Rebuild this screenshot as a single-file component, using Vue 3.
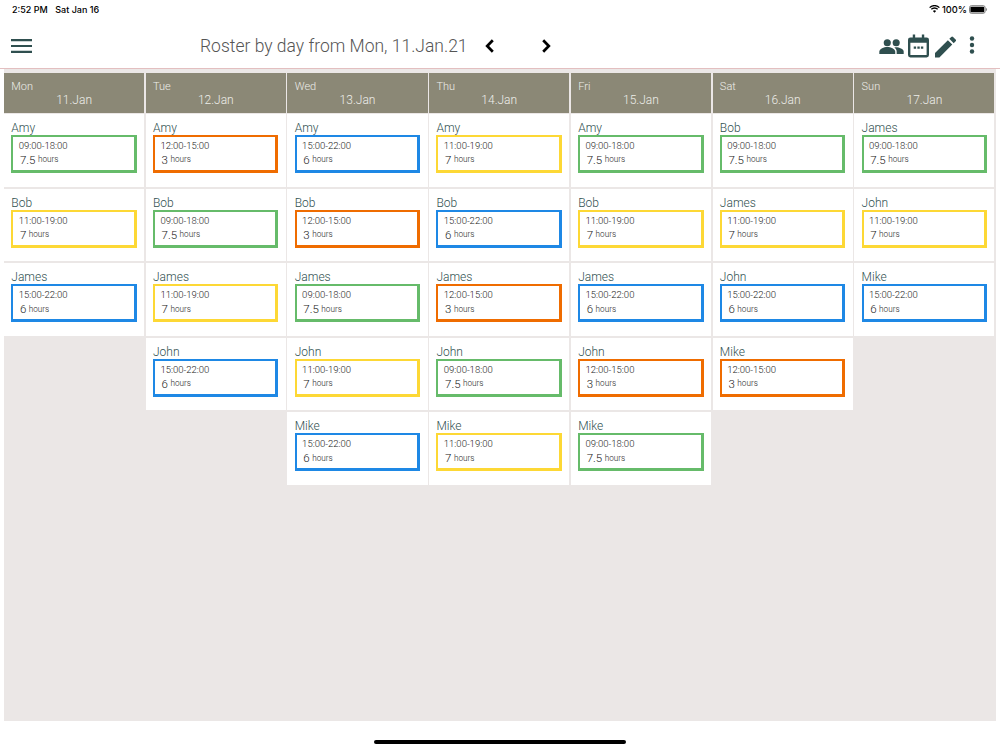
<script setup>
const S = {
  a: { t: '09:00-18:00', h: '7.5', c: 'green' },
  b: { t: '12:00-15:00', h: '3', c: 'orange' },
  c: { t: '15:00-22:00', h: '6', c: 'blue' },
  d: { t: '11:00-19:00', h: '7', c: 'yellow' },
}
const days = [
  { d: 'Mon', n: '11.Jan', r: [['Amy', 'a'], ['Bob', 'd'], ['James', 'c']] },
  { d: 'Tue', n: '12.Jan', r: [['Amy', 'b'], ['Bob', 'a'], ['James', 'd'], ['John', 'c']] },
  { d: 'Wed', n: '13.Jan', r: [['Amy', 'c'], ['Bob', 'b'], ['James', 'a'], ['John', 'd'], ['Mike', 'c']] },
  { d: 'Thu', n: '14.Jan', r: [['Amy', 'd'], ['Bob', 'c'], ['James', 'b'], ['John', 'a'], ['Mike', 'd']] },
  { d: 'Fri', n: '15.Jan', r: [['Amy', 'a'], ['Bob', 'd'], ['James', 'c'], ['John', 'b'], ['Mike', 'a']] },
  { d: 'Sat', n: '16.Jan', r: [['Bob', 'a'], ['James', 'd'], ['John', 'c'], ['Mike', 'b']] },
  { d: 'Sun', n: '17.Jan', r: [['James', 'a'], ['John', 'd'], ['Mike', 'c']] },
]
</script>

<template>
  <div class="page">
    <div class="status">
      <div class="status-left"><span>2:52 PM</span><span>Sat Jan 16</span></div>
      <div class="status-right">
        <svg class="wifi" viewBox="0 0 16 12" width="11" height="8">
          <path d="M8 11.500 5.600 8.900a3.400 3.400 0 0 1 4.800 0zM3.900 7.200l-1.300-1.400a7.600 7.600 0 0 1 10.800 0l-1.300 1.400a5.700 5.700 0 0 0-8.200 0zM1.400 4.600 0 3.200a11.300 11.300 0 0 1 16 0l-1.400 1.400a9.400 9.400 0 0 0-13.200 0z" fill="#000"/>
        </svg>
        <span class="pct">100%</span>
        <svg viewBox="0 0 20 9" width="19" height="9">
          <rect x=".5" y=".5" width="16.500" height="8" rx="2" fill="none" stroke="#777"/>
          <rect x="1.500" y="1.500" width="14.500" height="6" rx="1" fill="#000"/>
          <path d="M18 3v3c.7-.2 1-.8 1-1.500s-.3-1.300-1-1.500z" fill="#777"/>
        </svg>
      </div>
    </div>
    <header class="bar">
      <svg class="menu" viewBox="0 0 21 14" width="21" height="14">
        <path d="M0 1.200h21M0 7h21M0 12.800h21" stroke="#2f4f4f" stroke-width="2.200"/>
      </svg>
      <div class="title">Roster by day from Mon, 11.Jan.21</div>
      <svg class="chev prev" viewBox="0 0 10 14" width="10" height="14"><path d="M7.800 1.300 2.200 7l5.600 5.700" fill="none" stroke="#000" stroke-width="2.700"/></svg>
      <svg class="chev next" viewBox="0 0 10 14" width="10" height="14"><path d="M2.200 1.300 7.800 7l-5.600 5.700" fill="none" stroke="#000" stroke-width="2.700"/></svg>
      <div class="actions">
        <svg class="ic-people" viewBox="0 0 26 16" width="25" height="15">
          <circle cx="8.500" cy="4" r="3.800" fill="#2f4f4f"/>
          <circle cx="18" cy="4" r="3.800" fill="#2f4f4f"/>
          <path d="M0 16v-2.500c0-3 5-5 8.500-5s8.500 2 8.500 5V16z" fill="#2f4f4f"/>
          <path d="M18.500 16v-2.700c0-1.800-1-3.200-2.500-4.300.8-.2 1.500-.3 2-.3 3 0 8 1.800 8 4.600V16z" fill="#2f4f4f"/>
        </svg>
        <svg class="ic-cal" viewBox="0 0 22 24" width="21" height="24">
          <path d="M5 0h2.500v3h7V0H17v3h2.500A2.500 2.500 0 0 1 22 5.500v16a2.500 2.500 0 0 1-2.500 2.500h-17A2.500 2.500 0 0 1 0 21.500v-16A2.500 2.500 0 0 1 2.500 3H5zM2.500 8.500v13h17v-13z" fill="#2f4f4f"/>
          <path d="M6 12.500h2.500V15H6zM9.800 12.500h2.500V15H9.800zM13.500 12.500H16V15h-2.500z" fill="#2f4f4f"/>
        </svg>
        <svg class="ic-pen" viewBox="0 0 22 22" width="21" height="22">
          <path d="M0 22v-4.600L13.500 3.900l4.600 4.600L4.600 22zM15 2.400 17 .4a1.300 1.300 0 0 1 1.900 0l2.700 2.700a1.300 1.300 0 0 1 0 1.900l-2 2z" fill="#2f4f4f"/>
        </svg>
        <svg class="ic-dots" viewBox="0 0 6 18" width="6" height="18">
          <circle cx="3" cy="2.500" r="2.200" fill="#2f4f4f"/>
          <circle cx="3" cy="9" r="2.200" fill="#2f4f4f"/>
          <circle cx="3" cy="15.500" r="2.200" fill="#2f4f4f"/>
        </svg>
      </div>
    </header>
    <main class="canvas">
      <section v-for="day in days" :key="day.d" class="col">
        <div class="head">
          <div class="dow">{{ day.d }}</div>
          <div class="date">{{ day.n }}</div>
        </div>
        <div v-for="row in day.r" :key="row[0]" class="cell">
          <div class="name">{{ row[0] }}</div>
          <div class="shift" :class="S[row[1]].c">
            <div class="time">{{ S[row[1]].t }}</div>
            <div class="hrs"><span class="num">{{ S[row[1]].h }}</span><span class="unit">hours</span></div>
          </div>
        </div>
      </section>
    </main>
    <div class="home"><span class="pill"></span></div>
  </div>
</template>

<style>
html, body { margin: 0; background: #fff; }
</style>

<style scoped>
.page { width: 1000px; height: 750px; display: flex; flex-direction: column; font-family: Roboto, sans-serif; background: #fff; overflow: hidden; }
.status { height: 20px; flex: none; display: flex; justify-content: space-between; align-items: center; padding: 0 12px 2px 12px; box-sizing: border-box; font-size: 9px; font-weight: 500; color: #000; font-family: Inter, Roboto, sans-serif; }
.status-left { display: flex; gap: 7.500px; }
.status-right { display: flex; align-items: center; gap: 2px; }
.pct { font-size: 9.300px; }
.bar { height: 49px; flex: none; position: relative; box-sizing: border-box; display: flex; align-items: center; border-bottom: 1px solid #e3bfc0; padding: 4px 0 0 11px; }
.menu { flex: none; }
.title { margin-left: 168px; font-size: 17.500px; font-weight: 300; color: #555; width: 284.500px; white-space: nowrap; }
.chev { flex: none; }
.next { margin-left: 46px; }
.actions { position: absolute; top: 14px; right: 25px; display: flex; align-items: center; }
.ic-cal { margin-left: 4px; }
.ic-pen { margin-left: 6px; margin-top: 2px; }
.ic-dots { margin-left: 13px; margin-top: -2px; }
.canvas { height: 652px; flex: none; margin: 0 4px; padding: 3.700px 1.500px 0 0; box-sizing: border-box; background: #ebe7e6; display: grid; grid-template-columns: repeat(7, 1fr); column-gap: 1.500px; align-items: start; }
.col { display: flex; flex-direction: column; row-gap: 2px; }
.head { height: 40.600px; margin-bottom: -1.300px; background: #8b8876; color: #eeeeea; font-weight: 300; box-sizing: border-box; padding: 7px 0 0 7.300px; }
.dow { font-size: 11px; line-height: 13px; }
.date { font-size: 12px; line-height: 14px; text-align: center; margin-left: -7.300px; }
.cell { height: 72.600px; background: #fff; box-sizing: border-box; padding: 7px 7.500px 0 7.300px; }
.name { font-size: 12px; font-weight: 300; line-height: 14px; color: #2f4f4f; }
.shift { height: 38px; box-sizing: border-box; border: solid; border-width: 2px 3px 3px 2px; padding: 2px 0 0 5.400px; color: #222; font-weight: 300; }
.time { font-size: 9.500px; line-height: 13px; }
.hrs { display: flex; align-items: center; padding-left: 1.200px; margin-top: 1px; line-height: 15px; }
.num { font-size: 11.500px; }
.unit { font-size: 8.200px; margin-left: 2.500px; position: relative; top: -.5px; }
.green { border-color: #66bb6a; }
.orange { border-color: #ef6c00; }
.blue { border-color: #1e88e5; }
.yellow { border-color: #fdd835; }
.home { flex: 1; display: flex; justify-content: center; padding-top: 19px; }
.pill { width: 252px; height: 4px; border-radius: 2px; background: #000; }
</style>
